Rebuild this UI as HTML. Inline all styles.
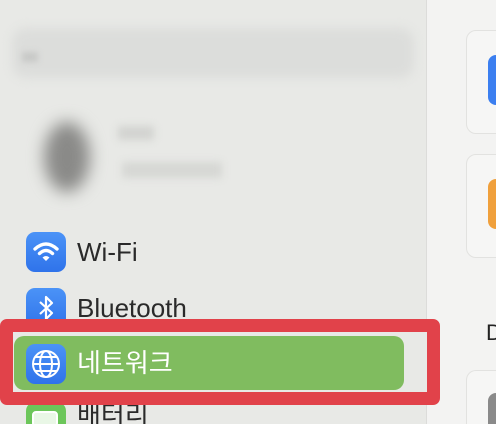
<!DOCTYPE html>
<html style="width:496px;height:424px;overflow:hidden"><head><meta charset="utf-8"><style>
*{margin:0;padding:0;box-sizing:border-box}
body{width:496px;height:424px;overflow:hidden;background:#e8e9e6;position:relative;font-family:"Liberation Sans","Noto Sans CJK KR",sans-serif}
.abs{position:absolute}
.right{left:426px;top:0;width:70px;height:424px;background:#f3f3f2;border-left:1px solid #dcdcda}
.card{left:466px;width:40px;background:#f6f6f5;border:1px solid #e2e2e0;border-radius:10px}
.ico{width:40px;height:40px;border-radius:9px;left:26px}
.lbl{left:77px;font-size:26px;color:#2a2a2a;line-height:30px}
</style></head><body>
<div class="abs" style="left:12px;top:28px;width:402px;height:50px;background:#dcdddb;border-radius:14px;filter:blur(5px)"></div>
<div class="abs" style="left:22px;top:52px;width:16px;height:10px;background:#c8c9c7;filter:blur(3px)"></div>
<div class="abs" style="left:44px;top:122px;width:46px;height:70px;border-radius:50%;background:#8a8a88;filter:blur(8px)"></div>
<div class="abs" style="left:118px;top:126px;width:36px;height:14px;background:#d2d3d0;filter:blur(4px)"></div>
<div class="abs" style="left:122px;top:162px;width:100px;height:16px;background:#d6d7d4;filter:blur(4px)"></div>

<div class="abs right"></div>
<div class="abs card" style="top:30px;height:104px"></div>
<div class="abs" style="left:488px;top:55px;width:20px;height:50px;background:#3c7ff0;border-radius:8px"></div>
<div class="abs card" style="top:154px;height:104px"></div>
<div class="abs" style="left:488px;top:179px;width:20px;height:50px;background:#f0a03c;border-radius:8px"></div>
<div class="abs" style="left:486px;top:320px;font-size:22px;color:#222">D</div>
<div class="abs card" style="top:370px;height:54px;border-bottom:none;border-radius:10px 10px 0 0"></div>
<div class="abs" style="left:488px;top:393px;width:20px;height:31px;background:#8a8a8a;border-radius:8px 8px 0 0"></div>

<div class="abs ico" style="top:232px;background:linear-gradient(#4b93f7,#2f73ea)">
<svg width="40" height="40" viewBox="0 0 40 40"><g fill="none" stroke="#fff" stroke-width="3.4" stroke-linecap="round"><path d="M9 17 Q20 7 31 17"/><path d="M13.5 21.5 Q20 15.5 26.5 21.5"/></g><path d="M16.5 25.5 Q20 22.5 23.5 25.5 L20 29 Z" fill="#fff"/></svg></div>
<div class="abs lbl" style="top:237px">Wi-Fi</div>

<div class="abs ico" style="top:288px;background:linear-gradient(#4b93f7,#2f73ea)">
<svg width="40" height="40" viewBox="0 0 40 40"><path d="M14 14 L26 25 L20 31 L20 9 L26 15 L14 26" fill="none" stroke="#fff" stroke-width="2.2" stroke-linejoin="round"/></svg></div>
<div class="abs lbl" style="top:293px">Bluetooth</div>

<div class="abs ico" style="top:402px;height:22px;border-radius:9px 9px 0 0;background:#6cc65a;overflow:hidden">
<div class="abs" style="left:6px;top:9px;width:26px;height:16px;border:2px solid #fff;border-radius:4px;background:#e9f7e6"></div></div>
<div class="abs lbl" style="top:400px;height:24px;overflow:hidden">배터리</div>

<div class="abs" style="left:0;top:319px;width:440px;height:86px;border:13px solid #e1424a;border-radius:7px;background:#e8e9e6"></div>
<div class="abs" style="left:14px;top:336px;width:390px;height:54px;background:#80bc5f;border-radius:10px"></div>
<div class="abs ico" style="top:344px;background:linear-gradient(#4b93f7,#2f73ea)">
<svg width="40" height="40" viewBox="0 0 40 40"><g fill="none" stroke="#fff" stroke-width="2"><circle cx="20" cy="20" r="13"/><ellipse cx="20" cy="20" rx="6" ry="13"/><path d="M7 20 H33 M9 13 H31 M9 27 H31"/></g></svg></div>
<div class="abs lbl" style="top:348px;color:#fff">네트워크</div>
</body></html>
